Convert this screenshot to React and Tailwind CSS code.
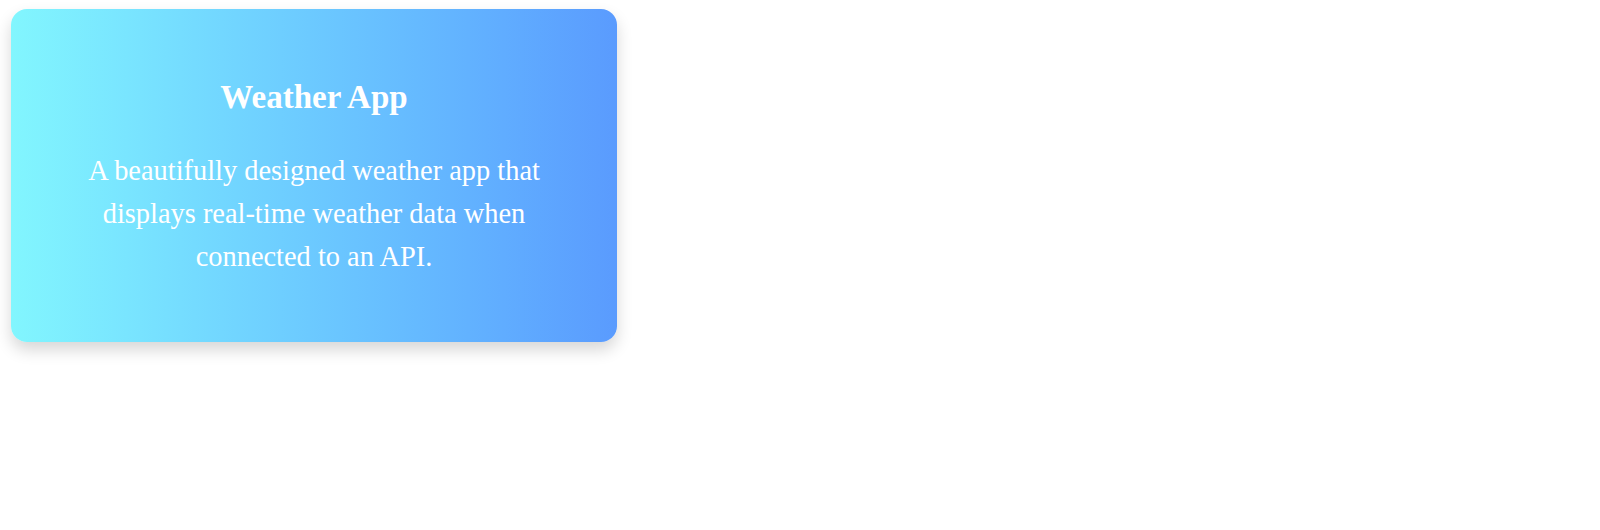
export default function App() {
  return (
    <div className="w-[1600px] h-[530px] bg-white" style={{ fontFamily: '"Liberation Serif", "Times New Roman", serif' }}>
      <div className="pt-[9px] pl-[11px]">
        <div className="w-[606px] h-[333px] rounded-2xl bg-gradient-to-r from-[#82f6fe] to-[#5a9bfe] shadow-[0_8px_16px_rgba(0,0,0,0.16)] flex flex-col items-center justify-center px-10 pt-[6px] text-center text-white">
          <h2 className="text-[33px] leading-[36px] font-bold mb-[34px]">Weather App</h2>
          <p className="text-[28.4px] leading-[43px]">
            A beautifully designed weather app that displays real-time weather data when connected to an API.
          </p>
        </div>
      </div>
    </div>
  );
}
